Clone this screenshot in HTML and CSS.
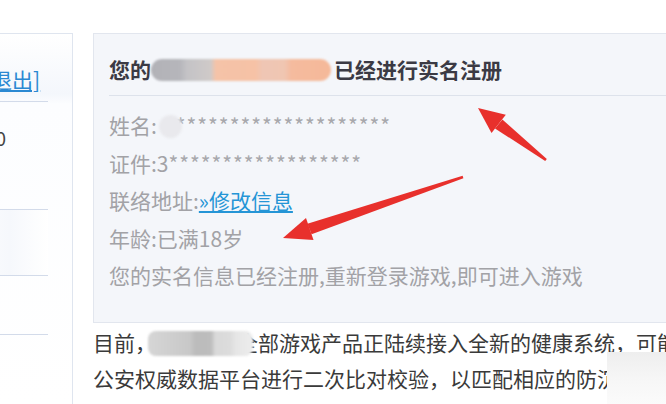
FILE: index.html
```html
<!DOCTYPE html>
<html lang="zh-CN">
<head>
<meta charset="utf-8">
<title>实名注册</title>
<link rel="stylesheet" href="styles.css">
</head>
<body>
<div class="page">
  <aside class="side">
    <div class="side-head"><a class="logout" href="#">[退出]</a></div>
    <div class="side-row side-row-num">10</div>
    <div class="side-row side-row-2"></div>
    <div class="side-row side-row-3"></div>
    <div class="side-row side-row-4"></div>
  </aside>
  <main class="main">
    <section class="panel">
      <h2 class="panel-title">您的<span class="blur-title"></span>已经进行实名注册</h2>
      <ul class="info">
        <li>姓名:<span class="blur-dot"></span><span class="stars">********************</span></li>
        <li>证件:3<span class="stars">******************</span></li>
        <li>联络地址:<a class="edit" href="#">»修改信息</a></li>
        <li>年龄:已满18岁</li>
        <li>您的实名信息已经注册,重新登录游戏,即可进入游戏</li>
      </ul>
    </section>
    <p class="article">
      <span class="line">目前，<span class="blur-text"></span>全部游戏产品正陆续接入全新的健康系统，可能通过</span>
      <span class="line">公安权威数据平台进行二次比对校验，以匹配相应的防沉迷规则</span>
    </p>
  </main>
  <svg class="arrows" width="666" height="404" viewBox="0 0 666 404" aria-hidden="true">
    <g fill="#e8302c">
      <polygon points="478,108 505.8,114.7 491.5,133"/>
      <polygon points="502.4,119.4 495,128.4 545.2,161 546.8,159"/>
      <polygon points="283,238 306,218 313.5,240"/>
      <polygon points="311.6,234.2 307.4,223.8 462.6,175.8 463.4,178.2"/>
    </g>
  </svg>
  <div class="watermark"></div>
</div>
</body>
</html>
```

FILE: styles.css
```css
html, body {
  margin: 0;
  padding: 0;
  background: #ffffff;
  overflow: hidden;
}

.page {
  position: relative;
  display: flex;
  gap: 20px;
  width: 666px;
  height: 404px;
  padding-top: 33px;
  box-sizing: border-box;
  overflow: hidden;
  font-family: "Noto Sans CJK SC", "Microsoft YaHei", sans-serif;
}

/* ---------- left sidebar ---------- */
.side {
  flex: none;
  width: 121px;
  margin-left: -48px;
  box-sizing: border-box;
  border-top: 1px solid #dfe5ef;
  border-right: 1px solid #dfe5ef;
  background: linear-gradient(180deg, #ffffff 0, #f4f7fc 60px, #fcfdff 70px, #ffffff 100%);
}

.side-head {
  height: 68px;
  box-sizing: border-box;
  padding: 33px 0 0 32px;
  margin-right: 24px;
  border-bottom: 1px solid #d3dbea;
}

.logout {
  font-size: 21px;
  line-height: 24px;
  color: #2a88d2;
  text-decoration: underline;
  white-space: nowrap;
}

.side-row {
  margin-right: 24px;
  border-bottom: 1px solid #d3dbea;
  box-sizing: border-box;
}

.side-row-num {
  height: 108px;
  padding: 24px 0 0 33px;
  font-size: 19px;
  line-height: 24px;
  color: #444444;
}

.side-row-2 {
  height: 66px;
  background: linear-gradient(90deg, #ffffff 0, #f6f8fc 60%, #ffffff 100%);
}

.side-row-3 {
  height: 59px;
}

.side-row-4 {
  border-bottom: none;
  height: 60px;
}

/* ---------- main ---------- */
.main {
  flex: none;
  width: 640px;
}

.panel {
  border: 1px solid #e2e6ee;
  border-right: none;
  background: #f4f6fa;
}

.panel-title {
  margin: 0 0 0 15px;
  padding: 22px 0 13px 0;
  font-size: 21px;
  line-height: 26px;
  font-weight: 700;
  color: #3b3a44;
  border-bottom: 1px solid #dde2eb;
  white-space: nowrap;
}

.blur-title {
  display: inline-block;
  width: 180px;
  height: 22px;
  margin-right: 3px;
  vertical-align: -3px;
  border-radius: 11px;
  background: linear-gradient(90deg, #b2b2b7 0, #b6b6bb 16%, #c4c3c6 20%, #cfcac9 33%, #f5c3a8 36%, #f6c2a6 58%, #efc6b5 62%, #f0c6b2 74%, #f5bb9e 78%, #f5b999 100%);
  filter: blur(0.8px);
}

.info {
  list-style: none;
  margin: 0;
  padding: 11px 0 27px 15px;
  font-size: 21px;
  line-height: 37.5px;
  color: #a2a2a6;
  white-space: nowrap;
}

.blur-dot {
  position: relative;
  z-index: 1;
  display: inline-block;
  width: 23px;
  height: 23px;
  margin: 0 -6px 0 2px;
  vertical-align: -4px;
  border-radius: 50%;
  background: #e9e9ed;
  filter: blur(1px);
}

.stars {
  color: #a8a8ac;
  letter-spacing: 0.95px;
}

.edit {
  color: #2595d6;
  text-decoration: underline;
}

.article {
  margin: 1px 0 0 0;
  font-size: 21px;
  line-height: 36px;
  color: #3a3a3a;
}

.line {
  display: block;
  white-space: nowrap;
}

.blur-text {
  position: relative;
  z-index: 1;
  display: inline-block;
  width: 105px;
  height: 25px;
  margin: 0 -16px 0 -8px;
  vertical-align: -5px;
  border-radius: 8px;
  background: linear-gradient(90deg, #d6d6d6 0, #cfcfcf 20%, #c8c8c8 40%, #bcbcbc 45%, #bdbdbd 60%, #d9d9d9 64%, #dcdcdc 78%, #e6e6e6 84%, #ededed 100%);
  filter: blur(1.2px);
}

/* ---------- overlays ---------- */
.arrows {
  position: absolute;
  left: 0;
  top: 0;
  pointer-events: none;
}

.watermark {
  position: absolute;
  left: 607px;
  top: 352px;
  width: 59px;
  height: 52px;
  background: linear-gradient(180deg, #eeeeee 0, #f6f6f6 50%, #fbfbfb 100%);
}
```
